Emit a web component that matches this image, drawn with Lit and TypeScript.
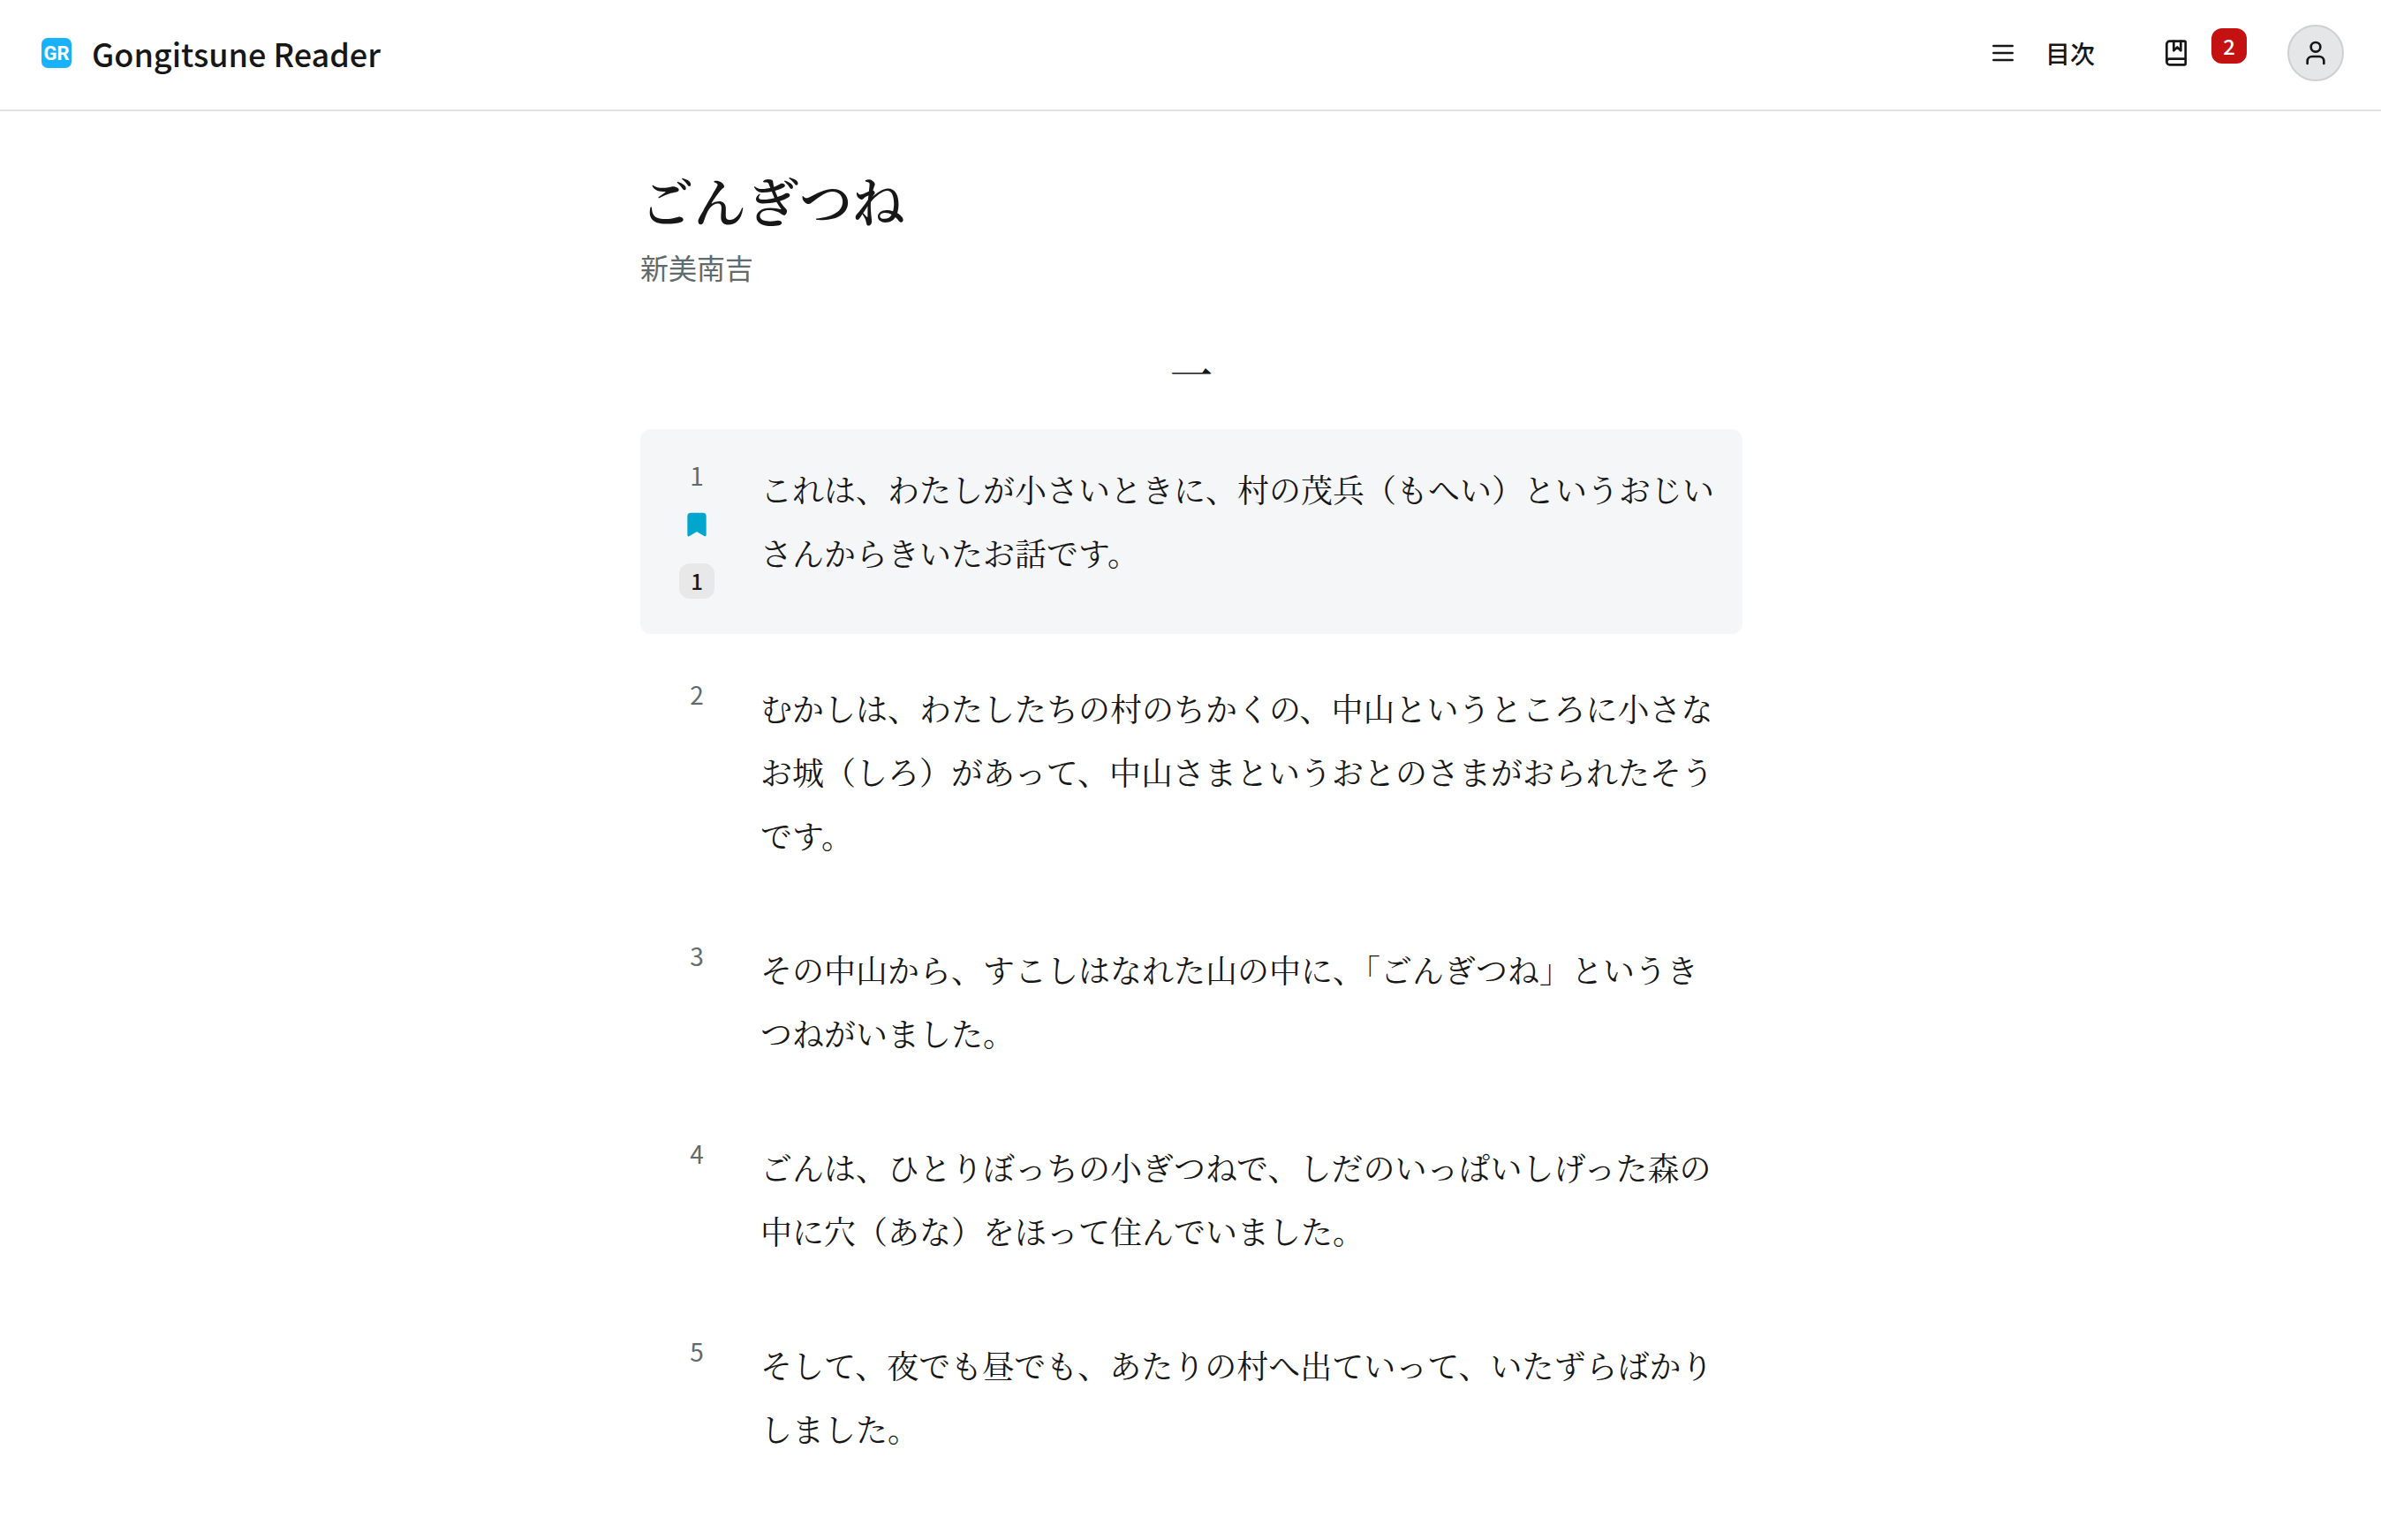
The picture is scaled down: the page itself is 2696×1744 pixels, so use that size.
import { LitElement, html, css, svg, nothing } from "lit";
import { customElement, property } from "lit/decorators.js";
import { classMap } from "lit/directives/class-map.js";

interface Paragraph {
  id: number;
  text: string;
  bookmarked?: boolean;
  notes?: number;
}

const paragraphs: Paragraph[] = [
  {
    id: 1,
    text: "これは、わたしが小さいときに、村の茂兵（もへい）というおじいさんからきいたお話です。",
    bookmarked: true,
    notes: 1,
  },
  {
    id: 2,
    text: "むかしは、わたしたちの村のちかくの、中山というところに小さなお城（しろ）があって、中山さまというおとのさまがおられたそうです。",
  },
  {
    id: 3,
    text: "その中山から、すこしはなれた山の中に、「ごんぎつね」というきつねがいました。",
  },
  {
    id: 4,
    text: "ごんは、ひとりぼっちの小ぎつねで、しだのいっぱいしげった森の中に穴（あな）をほって住んでいました。",
  },
  {
    id: 5,
    text: "そして、夜でも昼でも、あたりの村へ出ていって、いたずらばかりしました。",
  },
];

const icons = {
  menu: svg`<path d="M4 6h16M4 12h16M4 18h16"/>`,
  book: svg`<path d="M10 2v8l3-3 3 3V2"/><path d="M4 19.5v-15A2.5 2.5 0 0 1 6.5 2H19a1 1 0 0 1 1 1v18a1 1 0 0 1-1 1H6.5a1 1 0 0 1 0-5H20"/>`,
  user: svg`<path d="M19 21v-2a4 4 0 0 0-4-4H9a4 4 0 0 0-4 4v2"/><circle cx="12" cy="7" r="4"/>`,
  bookmark: svg`<path fill="currentColor" d="m19 21-7-4-7 4V5a2 2 0 0 1 2-2h10a2 2 0 0 1 2 2v16z"/>`,
};

@customElement("reader-icon")
export class ReaderIcon extends LitElement {
  @property() name: keyof typeof icons = "menu";

  static styles = css`
    :host {
      display: block;
      width: 32px;
      height: 32px;
    }
    .icon {
      display: block;
      width: 100%;
      height: 100%;
      fill: none;
      stroke: currentColor;
      stroke-width: 2;
      stroke-linecap: round;
      stroke-linejoin: round;
    }
  `;

  render() {
    return html`<svg class="icon" viewBox="0 0 24 24" aria-hidden="true">${icons[this.name]}</svg>`;
  }
}

@customElement("reader-header")
export class ReaderHeader extends LitElement {
  @property({ type: Number }) bookmarks = 0;

  static styles = css`
    :host {
      display: block;
    }
    .bar {
      display: flex;
      align-items: center;
      justify-content: space-between;
      padding: 28px 42px 32px 46px;
      border-bottom: 2px solid #e2e2e2;
    }
    .brand {
      display: flex;
      align-items: center;
      gap: 22px;
      color: inherit;
      text-decoration: none;
    }
    .logo {
      width: 36px;
      height: 36px;
    }
    .logo-text {
      font: 700 22px Roboto, "Liberation Sans", sans-serif;
      fill: #fff;
    }
    .name {
      font-size: 36px;
      font-weight: 500;
      line-height: 64px;
    }
    .actions {
      display: flex;
      align-items: center;
    }
    .action {
      display: flex;
      align-items: center;
      gap: 32px;
      margin: 0;
      padding: 0;
      border: 0;
      background: none;
      color: inherit;
      font: inherit;
      font-size: 28px;
      font-weight: 500;
      line-height: 64px;
      cursor: pointer;
    }
    .saved {
      gap: 24px;
      margin: 0 46px 0 76px;
    }
    .count {
      width: 40px;
      margin-bottom: 16px;
      border-radius: 12px;
      background: #c41212;
      color: #fff;
      font-size: 24px;
      line-height: 40px;
      text-align: center;
    }
    .avatar {
      justify-content: center;
      width: 64px;
      height: 64px;
      border: 2px solid #cfd0d0;
      border-radius: 50%;
      background: #e4e6e8;
    }
  `;

  render() {
    return html`
      <header class="bar">
        <a class="brand" href="#top">
          <svg class="logo" viewBox="0 0 36 36" aria-hidden="true">
            <rect x="1" y="1" width="34" height="34" rx="7" fill="#18b2fb" />
            <text class="logo-text" x="18" y="26" text-anchor="middle">GR</text>
          </svg>
          <span class="name">Gongitsune Reader</span>
        </a>
        <nav class="actions">
          <button class="action" type="button">
            <reader-icon name="menu"></reader-icon>
            <span>目次</span>
          </button>
          <button class="action saved" type="button" aria-label="しおり">
            <reader-icon name="book"></reader-icon>
            <span class="count">${this.bookmarks}</span>
          </button>
          <button class="action avatar" type="button" aria-label="アカウント">
            <reader-icon name="user"></reader-icon>
          </button>
        </nav>
      </header>
    `;
  }
}

@customElement("reader-paragraph")
export class ReaderParagraph extends LitElement {
  @property({ attribute: false }) paragraph!: Paragraph;

  static styles = css`
    :host {
      display: block;
    }
    .row {
      display: flex;
      gap: 40px;
      padding: 32px;
      border-radius: 12px;
    }
    .marked {
      background: #f5f6f8;
    }
    .gutter {
      display: flex;
      flex: none;
      flex-direction: column;
      align-items: center;
      gap: 8px;
      width: 64px;
    }
    .number {
      color: #5f6b6c;
      font-size: 28px;
      line-height: 40px;
    }
    .mark {
      display: flex;
      align-items: center;
      height: 56px;
      padding: 0;
      border: 0;
      background: none;
      color: #00a6cb;
      cursor: pointer;
    }
    .notes {
      width: 40px;
      margin: 8px 0;
      padding: 0;
      border: 0;
      border-radius: 12px;
      background: #e8e8e8;
      color: inherit;
      font: inherit;
      font-size: 24px;
      font-weight: 500;
      line-height: 40px;
      text-align: center;
      cursor: pointer;
    }
    .text {
      flex: 1;
      margin: 0;
      font-family: "Noto Serif CJK JP", "Noto Serif JP", "Noto Sans CJK JP", serif;
      font-size: 36px;
      line-height: 72px;
    }
  `;

  render() {
    const { id, text, bookmarked, notes } = this.paragraph;
    return html`
      <div class=${classMap({ row: true, marked: !!bookmarked })}>
        <div class="gutter">
          <span class="number">${id}</span>
          ${bookmarked
            ? html`<button class="mark" type="button" aria-label="しおりを外す">
                <reader-icon name="bookmark"></reader-icon>
              </button>`
            : nothing}
          ${notes ? html`<button class="notes" type="button">${notes}</button>` : nothing}
        </div>
        <p class="text">${text}</p>
      </div>
    `;
  }
}

@customElement("app-root")
export class AppRoot extends LitElement {
  static styles = css`
    :host {
      display: block;
      min-height: 100vh;
      background: #fff;
      color: #171717;
      font-family: "Noto Sans CJK JP", sans-serif;
    }
    .story {
      display: flex;
      flex-direction: column;
      max-width: 1248px;
      margin: 0 auto;
      padding: 60px 0 64px 2px;
    }
    .title,
    .chapter {
      margin: 0;
      font-family: "Noto Serif CJK JP", "Noto Serif JP", "Noto Sans CJK JP", serif;
      font-weight: 600;
    }
    .title {
      font-size: 60px;
      line-height: 80px;
    }
    .author {
      margin: 10px 0 0;
      color: #5f6b6c;
      font-size: 32px;
      line-height: 52px;
    }
    .chapter {
      padding: 64px 0 34px;
      font-size: 48px;
      line-height: 60px;
      text-align: center;
    }
    .paragraphs {
      display: flex;
      flex-direction: column;
      gap: 16px;
    }
  `;

  render() {
    return html`
      <reader-header .bookmarks=${2}></reader-header>
      <main class="story" lang="ja">
        <h1 class="title">ごんぎつね</h1>
        <p class="author">新美南吉</p>
        <h2 class="chapter">一</h2>
        <div class="paragraphs">
          ${paragraphs.map((p) => html`<reader-paragraph .paragraph=${p}></reader-paragraph>`)}
        </div>
      </main>
    `;
  }
}
